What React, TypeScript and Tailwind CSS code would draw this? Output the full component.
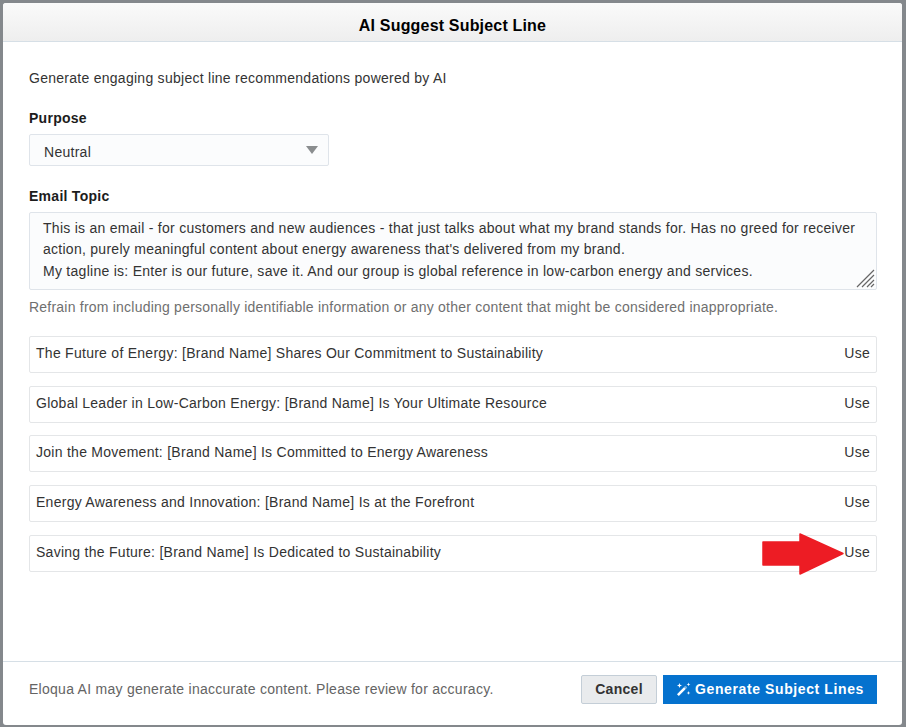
const suggestions = [
  "The Future of Energy: [Brand Name] Shares Our Commitment to Sustainability",
  "Global Leader in Low-Carbon Energy: [Brand Name] Is Your Ultimate Resource",
  "Join the Movement: [Brand Name] Is Committed to Energy Awareness",
  "Energy Awareness and Innovation: [Brand Name] Is at the Forefront",
  "Saving the Future: [Brand Name] Is Dedicated to Sustainability",
];

function WandIcon() {
  return (
    <svg width="15" height="15" viewBox="0 0 15 15" fill="white">
      {/* wand */}
      <path d="M1 12.2 9.4 3.8 11.2 5.6 2.8 14Z" />
      <path d="M7.9 5.3 9.4 3.8 11.2 5.6 9.7 7.1Z" fill="#0572ce" opacity="0.55" />
      {/* sparkles */}
      <path d="M3.5 1 4.2 2.8 6 3.5 4.2 4.2 3.5 6 2.8 4.2 1 3.5 2.8 2.8Z" />
      <path d="M12.5 0.5 13 1.9 14.4 2.4 13 2.9 12.5 4.3 12 2.9 10.6 2.4 12 1.9Z" />
      <path d="M12.5 9 13 10.4 14.4 10.9 13 11.4 12.5 12.8 12 11.4 10.6 10.9 12 10.4Z" />
    </svg>
  );
}

export default function App() {
  return (
    <div className="relative h-[727px] w-[906px] overflow-hidden bg-[#84888c] pt-[3px] pl-[3px] font-['Liberation_Sans',Arial,sans-serif] text-[14px] tracking-[0.27px] text-[#161513]">
      <div className="flex h-[722px] w-[899px] flex-col rounded-[3px] bg-white">
        <div className="flex h-[39px] shrink-0 items-center justify-center rounded-t-[3px] border-b border-[#d6dfe6] bg-gradient-to-b from-[#fafafa] to-[#eeeeee] pt-[8px]">
          <h1 className="text-[16px] font-bold tracking-[0.18px] text-black">AI Suggest Subject Line</h1>
        </div>

        <div className="flex-1 px-[26px]">
          <p className="mt-[28px] h-[16px] leading-[16px] text-[#333333]">Generate engaging subject line recommendations powered by AI</p>

          <div className="mt-[24px] h-[16px] font-bold leading-[16px] text-[#1c1c1c]">Purpose</div>
          <div className="mt-[8px] flex h-[32px] w-[300px] items-center justify-between rounded-[2px] border border-[#dfe4ea] bg-[#fbfcfd] pt-[4px] pr-[10px] pl-[14px] text-[#333333]">
            <span>Neutral</span>
            <span className="mb-[4px] h-0 w-0 border-x-[6px] border-t-[8px] border-x-transparent border-t-[#8a8d8f]" />
          </div>

          <div className="mt-[22px] h-[16px] font-bold leading-[16px] text-[#1c1c1c]">Email Topic</div>
          <div className="relative mt-[8px] h-[78px] w-[848px] rounded-[2px] border border-[#dfe4ea] bg-[#fbfcfd] pt-[5px] pl-[13px] leading-[21.4px] text-[#333333]">
            <p>
              This is an email - for customers and new audiences - that just talks about what my brand stands for. Has no greed for receiver
              <br />
              action, purely meaningful content about energy awareness that's delivered from my brand.
              <br />
              My tagline is: Enter is our future, save it. And our group is global reference in low-carbon energy and services.
            </p>
            <svg className="absolute right-0 bottom-0" width="20" height="20" viewBox="0 0 20 20" fill="none" stroke="#666666" strokeWidth="1.2">
              <path d="M1 18 18 1M6 18 18 6M11 18 18 11M15 18 18 15" />
            </svg>
          </div>

          <p className="mt-[9px] h-[16px] leading-[16px] tracking-[0.22px] text-[#6f6f6f]">
            Refrain from including personally identifiable information or any other content that might be considered inappropriate.
          </p>

          <div className="mt-[21px] flex w-[848px] flex-col gap-[12.7px]">
            {suggestions.map((s) => (
              <div key={s} className="flex h-[37px] items-center justify-between rounded-[2px] border border-[#e4e6e8] pr-[6px] pb-[2px] pl-[6px] text-[#333333]">
                <span>{s}</span>
                <span>Use</span>
              </div>
            ))}
          </div>
        </div>

        <div className="flex h-[64px] shrink-0 items-center justify-between border-t border-[#d6dfe6] pr-[25px] pb-[8px] pl-[26px]">
          <span className="text-[#646464]">Eloqua AI may generate inaccurate content. Please review for accuracy.</span>
          <div className="flex items-center gap-[6px]">
            <button className="h-[29px] w-[76px] rounded-[2px] border border-[#c4ced7] bg-[#e9ebed] font-bold tracking-[0.3px] text-[#333333]">Cancel</button>
            <button className="flex h-[29px] w-[214px] items-center justify-center gap-[4px] border border-[#0572ce] bg-[#0572ce] font-bold tracking-[0.6px] text-white">
              <WandIcon />
              Generate Subject Lines
            </button>
          </div>
        </div>
      </div>

      {/* annotation arrow drawn over the last row */}
      <svg className="absolute top-[533px] left-[762px]" width="82" height="42" viewBox="0 0 82 42">
        <path d="M1 9H38V1L81 20.5 38 41V32H1Z" fill="#ed1c24" stroke="#ed1c24" strokeWidth="1.5" strokeLinejoin="round" />
      </svg>
    </div>
  );
}
